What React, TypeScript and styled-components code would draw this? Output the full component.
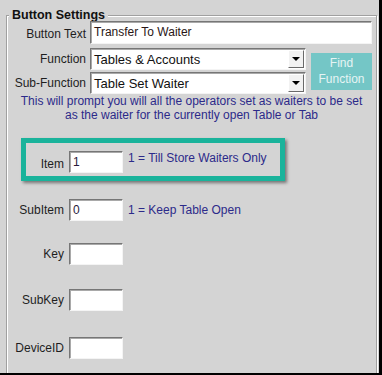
import styled, { createGlobalStyle } from "styled-components";

const GlobalStyle = createGlobalStyle`
  html, body {
    margin: 0;
    background: #000;
  }
  * {
    box-sizing: border-box;
  }
`;

const Frame = styled.div`
  width: 379px;
  height: 373px;
  padding: 0 2px 0 6px;
  background: #d4d4d4;
  overflow: hidden;
  font-family: "Liberation Sans", Arial, sans-serif;
  color: #1e1e1e;
`;

const GroupBox = styled.fieldset`
  margin: 9px 0 0;
  padding: 0;
  min-width: 0;
  min-height: 400px;
  border: 1px solid #a0a0a0;
  box-shadow: inset 1px 1px 0 #fff, 1px 1px 0 #fff;
`;

const Legend = styled.legend`
  margin-left: 2px;
  padding: 0 3px;
  font-size: 12.5px;
  font-weight: bold;
  line-height: 12px;
  color: #111;
  background: #d4d4d4;
`;

const TopGrid = styled.div`
  display: grid;
  grid-template-columns: 79px 216px 62px;
  grid-template-rows: 25px 22px 22px;
  column-gap: 4px;
  row-gap: 2px;
`;

const Label = styled.div<{ $width?: number }>`
  ${({ $width }) => ($width ? `width: ${$width}px; flex: none;` : "")}
  align-self: center;
  text-align: right;
  font-size: 12px;
  white-space: nowrap;
  color: #1e1e1e;
`;

const sunken = `
  border: 1px solid;
  border-color: #767676 #f4f4f4 #f4f4f4 #767676;
  box-shadow: inset 1px 1px 0 #a9a9a9;
  background: #fff;
`;

const TextBox = styled.div`
  ${sunken}
  grid-column: 2 / span 2;
  height: 23px;
  padding: 3px 3px 0;
  font-size: 12px;
  color: #2a1616;
`;

const Select = styled.div`
  ${sunken}
  position: relative;
  display: flex;
  align-items: center;
  height: 22px;
  padding: 0 3px;
  font-size: 13px;
  color: #111;
`;

const ArrowButton = styled.div`
  position: absolute;
  right: 1px;
  top: 1px;
  width: 16px;
  height: 18px;
  display: flex;
  align-items: center;
  justify-content: center;
  background: #f2f2f2;
  border: 1px solid;
  border-color: #fff #6a6a6a #6a6a6a #fff;

  &::after {
    content: "";
    border-left: 4px solid transparent;
    border-right: 4px solid transparent;
    border-top: 4px solid #000;
  }
`;

const FindButton = styled.button`
  grid-column: 3;
  grid-row: 2 / span 2;
  align-self: center;
  justify-self: end;
  width: 61px;
  height: 37px;
  padding: 0;
  border: none;
  background: #74c6c6;
  color: #e6f4f4;
  font-family: "Liberation Sans", Arial, sans-serif;
  font-size: 12px;
  line-height: 16px;
`;

const Description = styled.p`
  margin: 0;
  text-align: center;
  font-size: 12px;
  line-height: 14px;
  color: #2c2a8a;
`;

const HighlightBox = styled.div`
  display: flex;
  align-items: flex-start;
  gap: 5px;
  width: 264px;
  height: 43px;
  margin: 16px 0 0 14px;
  padding-top: 8px;
  border: 5px solid #1ab39b;
  box-shadow: 2px 2px 3px rgba(0, 0, 0, 0.45);
`;

const FieldRow = styled.div<{ $top: number }>`
  display: flex;
  align-items: center;
  gap: 5px;
  margin-top: ${({ $top }) => $top}px;
`;

const SmallInput = styled.div`
  ${sunken}
  flex: none;
  width: 54px;
  height: 22px;
  padding: 3px 3px 0;
  font-size: 12px;
  color: #2a1a3a;
`;

const Hint = styled.span`
  font-size: 12px;
  color: #2c2a8a;
  white-space: nowrap;
`;

const lowerRows = [
  { label: "SubItem", value: "0", hint: "1 = Keep Table Open", top: 18 },
  { label: "Key", value: "", top: 22 },
  { label: "SubKey", value: "", top: 24 },
  { label: "DeviceID", value: "", top: 26 },
];

const App = () => {
  return (
    <>
      <GlobalStyle />
      <Frame>
        <GroupBox>
          <Legend>Button Settings</Legend>
          <TopGrid>
            <Label>Button Text</Label>
            <TextBox>Transfer To Waiter</TextBox>
            <Label>Function</Label>
            <Select>
              Tables &amp; Accounts
              <ArrowButton />
            </Select>
            <FindButton>
              Find
              <br />
              Function
            </FindButton>
            <Label>Sub-Function</Label>
            <Select>
              Table Set Waiter
              <ArrowButton />
            </Select>
          </TopGrid>
          <Description>
            This will prompt you will all the operators set as waiters to be set
            <br />
            as the waiter for the currently open Table or Tab
          </Description>

          <HighlightBox>
            <Label $width={38}>Item</Label>
            <SmallInput>1</SmallInput>
            <Hint>1 = Till Store Waiters Only</Hint>
          </HighlightBox>

          {lowerRows.map((row) => (
            <FieldRow key={row.label} $top={row.top}>
              <Label $width={57}>{row.label}</Label>
              <SmallInput>{row.value}</SmallInput>
              {row.hint && <Hint>{row.hint}</Hint>}
            </FieldRow>
          ))}
        </GroupBox>
      </Frame>
    </>
  );
};

export default App;
